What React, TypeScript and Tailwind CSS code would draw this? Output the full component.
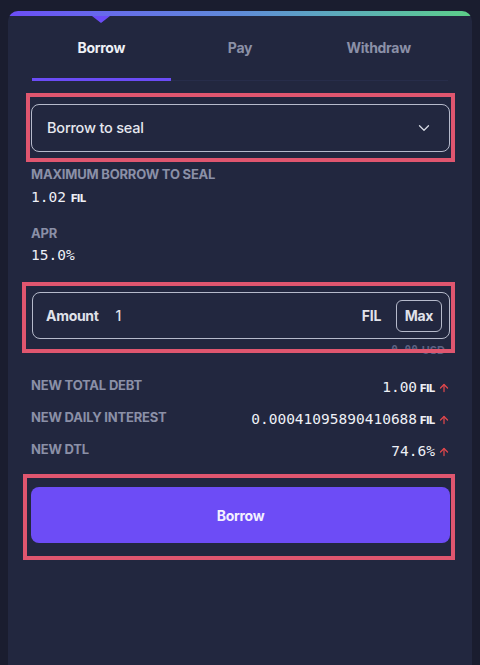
import { ChevronDown, ArrowUp } from 'lucide-react';

const TABS = ['Borrow', 'Pay', 'Withdraw'];

const ROWS = [
  { label: 'NEW TOTAL DEBT', value: '1.00', unit: 'FIL' },
  { label: 'NEW DAILY INTEREST', value: '0.00041095890410688', unit: 'FIL' },
  { label: 'NEW DTL', value: '74.6%', unit: '' },
];

const mono = "font-['DejaVu_Sans_Mono',monospace]";

// annotation outline drawn over the element
function Marker({ className }: { className: string }) {
  return <div className={`pointer-events-none absolute border-4 border-[#e0566f] z-10 ${className}`} />;
}

export default function App() {
  return (
    <div className="min-h-[665px] h-[665px] overflow-hidden bg-[#1a1d2f] pt-[11px] px-[8px] font-['Inter',sans-serif]">
      <div className="relative h-full rounded-t-[10px] overflow-hidden bg-[#22273f]">
        {/* gradient top bar */}
        <div className="h-[5px] bg-gradient-to-r from-[#6b4cf6] via-[#5f8bd8] to-[#5ccf87]" />
        <div className="absolute left-[84px] top-[5px] w-0 h-0 border-l-[9px] border-r-[9px] border-t-[7px] border-l-transparent border-r-transparent border-t-[#6b4cf6]" />

        {/* tabs */}
        <div className="grid grid-cols-3 px-[24px]">
          {TABS.map((t, i) => (
            <div key={t} className="flex flex-col">
              <div className={`h-[62px] flex items-center justify-center text-[14px] font-bold tracking-[-0.3px] ${i === 0 ? 'text-[#eef0f6]' : 'text-[#8b90a7]'}`}>
                {t}
              </div>
              {i === 0 ? (
                <div className="h-[3px] bg-[#6b4cf6]" />
              ) : (
                <div className="h-[3px] flex items-end"><div className="h-[1px] w-full bg-[#272d4a]" /></div>
              )}
            </div>
          ))}
        </div>

        <div className="pl-[23px] pr-[22px]">
          {/* select */}
          <div className="relative mt-[23px]">
            <Marker className="-left-[5px] -right-[5px] -top-[11px] -bottom-[10px]" />
            <div className="h-[48px] rounded-[8px] border-[1.5px] border-[#b6bacb] flex items-center justify-between pl-[15px] pr-[16px]">
              <span className="text-[14.5px] font-medium text-[#e6e8ef] tracking-[-0.2px]">Borrow to seal</span>
              <ChevronDown size={18} strokeWidth={1.75} className="text-[#d5d8e2]" />
            </div>
          </div>

          <div className="mt-[14px] text-[13px] leading-[16px] font-bold text-[#8b90a7] tracking-[-0.2px]">MAXIMUM BORROW TO SEAL</div>
          <div className="mt-[6px] h-[20px] flex items-center text-[#eef0f6]">
            <span className={`${mono} text-[14.5px]`}>1.02</span>
            <span className="ml-[5px] text-[11px] font-extrabold tracking-[-0.3px]">FIL</span>
          </div>

          <div className="mt-[17px] text-[13px] leading-[16px] font-bold text-[#8b90a7] tracking-[-0.2px]">APR</div>
          <div className={`mt-[5px] h-[20px] flex items-center text-[#eef0f6] ${mono} text-[14.5px]`}>15.0%</div>

          {/* amount input */}
          <div className="relative mt-[26px] ml-[1px]">
            <Marker className="-left-[10px] -right-[5px] -top-[10px] -bottom-[14px]" />
            <div className="h-[47px] rounded-[8px] border-[1.5px] border-[#b6bacb] flex items-center pl-[13px] pr-[7px]">
              <span className="text-[14px] font-bold text-[#e0e2ea] tracking-[-0.3px]">Amount</span>
              <span className="ml-[17px] text-[14px] font-medium text-[#e0e2ea]">1</span>
              <span className="ml-auto text-[14px] font-bold text-[#e0e2ea] tracking-[-0.3px]">FIL</span>
              <div className="ml-[15px] w-[46px] h-[32px] rounded-[6px] border-[1.5px] border-[#b6bacb] flex items-center justify-center text-[14px] font-bold text-[#e0e2ea] tracking-[-0.3px]">
                Max
              </div>
            </div>
          </div>
          <div className="mt-[4px] h-[14px] pr-[5px] flex justify-end items-center text-[11px] font-bold text-[#5d6283]">
            <span className={mono}>0.00</span>
            <span className="ml-[4px]">USD</span>
          </div>

          {/* summary rows */}
          <div className="mt-[20px] flex flex-col">
            {ROWS.map((r) => (
              <div key={r.label} className="h-[32px] flex items-start justify-between">
                <span className="text-[13px] leading-[16px] font-bold text-[#8b90a7] tracking-[-0.2px]">{r.label}</span>
                <span className="mt-[1px] h-[20px] flex items-center text-[#eef0f6]">
                  <span className={`${mono} text-[14.5px]`}>{r.value}</span>
                  {r.unit && <span className="ml-[3px] text-[11px] font-extrabold tracking-[-0.3px]">{r.unit}</span>}
                  <ArrowUp size={12} strokeWidth={2.5} className="ml-[3px] text-[#e0474c]" />
                </span>
              </div>
            ))}
          </div>

          {/* borrow button */}
          <div className="relative mt-[14px]">
            <Marker className="-left-[8px] -right-[5px] -top-[13px] -bottom-[17px]" />
            <button className="w-full h-[56px] rounded-[8px] bg-[#6d4cf6] text-[14px] font-bold text-[#f3f0ff] tracking-[-0.3px]">
              Borrow
            </button>
          </div>
        </div>
      </div>
    </div>
  );
}
